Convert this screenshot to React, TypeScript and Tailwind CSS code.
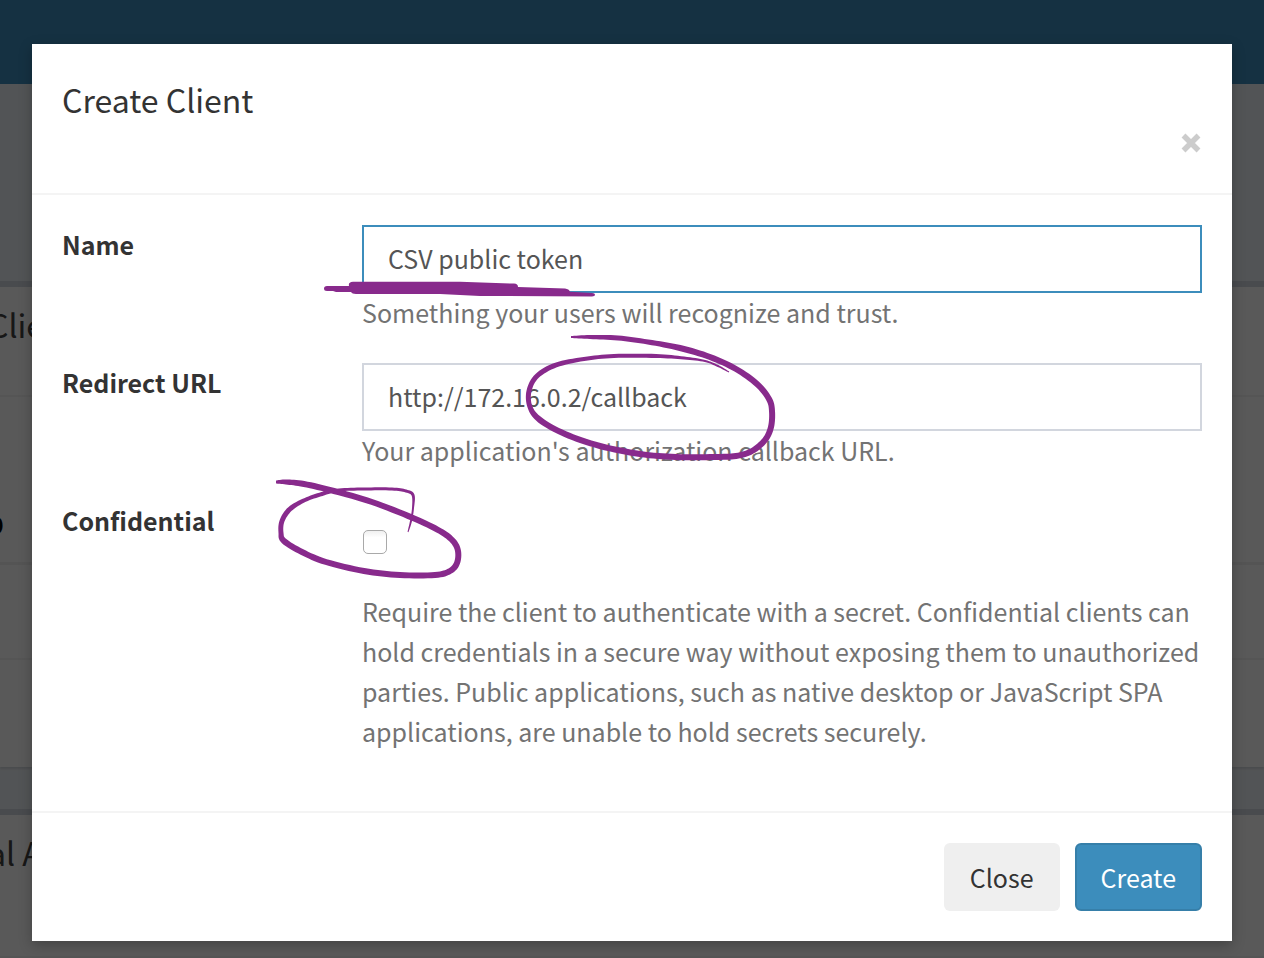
import { useState } from "react";

type BrushPoint = [x: number, y: number, width: number];

const CHECKBOX_LOOP: BrushPoint[] = [
  [276, 482, 3], [286, 482, 5], [304, 484, 6], [334, 491, 6], [372, 502, 6], [413, 518, 6],
  [440, 531, 6], [453, 541, 6], [458, 551, 6], [457, 563, 6], [450, 571, 6], [435, 575, 6],
  [400, 575, 6], [364, 571, 6], [326, 562, 6], [302, 552, 6], [284, 541, 6], [281, 533, 5],
  [282, 521, 5], [290, 509, 5], [305, 500, 4], [322, 494, 4], [339, 490, 3], [364, 489, 3],
  [392, 489, 3], [406, 491, 3], [413, 495, 3], [413, 508, 2], [411, 521, 2], [408, 532, 1],
];

const CALLBACK_LOOP: BrushPoint[] = [
  [571, 337, 2], [590, 337, 4], [618, 338, 5], [648, 342, 5], [680, 348, 6], [710, 357, 6],
  [736, 369, 6], [757, 384, 6], [769, 399, 6], [772, 411, 6], [771, 427, 6], [765, 440, 6],
  [752, 451, 6], [736, 456, 6], [714, 457, 6], [676, 457, 6], [640, 454, 6], [600, 446, 6],
  [565, 434, 6], [540, 420, 6], [530, 407, 5], [529, 391, 5], [537, 376, 5], [556, 365, 5],
  [584, 359, 4], [614, 356, 4], [656, 356, 4], [684, 358, 3], [705, 361, 2], [718, 366, 2],
  [729, 372, 1],
];

/** Outline of a tapering pen stroke that runs smoothly through the given points. */
function brushPath(points: BrushPoint[]): string {
  const samples: BrushPoint[] = [];
  const steps = 8;
  for (let i = 0; i < points.length - 1; i++) {
    const p0 = points[Math.max(i - 1, 0)];
    const p1 = points[i];
    const p2 = points[i + 1];
    const p3 = points[Math.min(i + 2, points.length - 1)];
    for (let s = 0; s < steps; s++) {
      const t = s / steps;
      const at = (k: 0 | 1 | 2) =>
        0.5 *
        (2 * p1[k] +
          (p2[k] - p0[k]) * t +
          (2 * p0[k] - 5 * p1[k] + 4 * p2[k] - p3[k]) * t * t +
          (3 * p1[k] - p0[k] - 3 * p2[k] + p3[k]) * t * t * t);
      samples.push([at(0), at(1), at(2)]);
    }
  }
  samples.push(points[points.length - 1]);
  const left: string[] = [];
  const right: string[] = [];
  samples.forEach(([x, y, w], i) => {
    const a = samples[Math.max(i - 1, 0)];
    const b = samples[Math.min(i + 1, samples.length - 1)];
    const len = Math.hypot(b[0] - a[0], b[1] - a[1]) || 1;
    const nx = (-(b[1] - a[1]) / len) * (w / 2);
    const ny = ((b[0] - a[0]) / len) * (w / 2);
    left.push(`${(x + nx).toFixed(2)} ${(y + ny).toFixed(2)}`);
    right.unshift(`${(x - nx).toFixed(2)} ${(y - ny).toFixed(2)}`);
  });
  return `M${left.join("L")}L${right.join("L")}Z`;
}

function Annotations() {
  return (
    <svg
      className="pointer-events-none absolute top-0 left-0 h-[897px] w-[1200px] max-w-none"
      viewBox="32 44 1200 897"
      fill="#882a8c"
      aria-hidden="true"
    >
      <path d="M324 288.500Q324 286 327 286L349 286Q348 282 353 281.700L460 281.700L514 283.600Q518 284 518 287L565 288.500Q569 289 570 291.700L592 293Q595 293 595 295Q595 296.400 592 296.400L480 296L440 293.900L356 294Q352 293.800 351 292L336 292L333 291L327 291Q324 291 324 288.500Z" />
      <path d={brushPath(CALLBACK_LOOP)} />
      <path d={brushPath(CHECKBOX_LOOP)} />
    </svg>
  );
}

function PageBehind() {
  return (
    <div className="col-start-1 row-start-1 overflow-hidden bg-[#ecf0f5] text-[32px] leading-10 text-[#444]" aria-hidden="true">
      <div className="h-[84px] bg-[#3c8dbc]" />
      <div className="mt-[197px] border-t-[6px] border-[#d2d6de] bg-white shadow-[0_2px_2px_rgba(0,0,0,0.1)]">
        <div className="-ml-3 h-[110px] border-b-2 border-[#f4f4f4] pt-[17px]">Clie</div>
        <div className="-ml-[14px] h-[168px] border-b-3 border-[#f0f0f0] pt-[107px] text-[25px] font-bold text-black">D</div>
        <div className="h-[95px] border-b-2 border-[#f4f4f4]" />
        <div className="h-[107px]" />
      </div>
      <div className="mt-[42px] border-t-[6px] border-[#d2d6de] bg-white">
        <div className="-ml-3 h-[143px] border-b-2 border-[#f4f4f4] pt-[17px]">al A</div>
      </div>
    </div>
  );
}

interface TextFieldProps {
  id: string;
  label: string;
  help: string;
  value: string;
  active?: boolean;
  onChange: (value: string) => void;
}

function TextField({ id, label, help, value, active = false, onChange }: TextFieldProps) {
  return (
    <div className="grid grid-cols-[270px_1fr] gap-x-[30px]">
      <label htmlFor={id} className="-mt-px font-bold">
        {label}
      </label>
      <div>
        <input
          id={id}
          type="text"
          value={value}
          onChange={(e) => onChange(e.target.value)}
          aria-describedby={`${id}-help`}
          className={`block h-[68px] w-full border-2 bg-white px-6 pb-0.5 text-[#555] outline-none focus:border-[#3c8dbc] ${
            active ? "border-[#3c8dbc]" : "border-[#d2d6de]"
          }`}
        />
        <p id={`${id}-help`} className="-mt-px text-[#737373]">
          {help}
        </p>
      </div>
    </div>
  );
}

export default function App() {
  const [name, setName] = useState("CSV public token");
  const [redirect, setRedirect] = useState("http://172.16.0.2/callback");
  const [confidential, setConfidential] = useState(false);

  return (
    <div className="grid min-h-screen grid-cols-1 font-['Noto_Sans_CJK_SC','Noto_Sans',sans-serif] text-[25px] leading-10 text-[#333]">
      <PageBehind />
      <div className="z-10 col-start-1 row-start-1 bg-black/65 px-8 pt-11 pb-4">
        <section
          role="dialog"
          aria-modal="true"
          aria-labelledby="dialog-title"
          className="relative bg-white shadow-[0_4px_12px_rgba(0,0,0,0.25)]"
        >
          <header className="flex h-[151px] items-start justify-between border-b-2 border-[#f4f4f4] px-[30px] pt-[35px]">
            <h4 id="dialog-title" className="text-[32px]">
              Create Client
            </h4>
            <button type="button" aria-label="Dismiss" className="mt-[53px] p-px">
              <svg className="size-5" viewBox="0 0 20 20" stroke="#ccc" strokeWidth="5.500" aria-hidden="true">
                <path d="M2.500 2.500L17.500 17.500M17.500 2.500L2.500 17.500" />
              </svg>
            </button>
          </header>

          <form className="flex flex-col gap-[31px] px-[30px] pt-[30px] pb-[60px]">
            <TextField
              id="client-name"
              label="Name"
              help="Something your users will recognize and trust."
              value={name}
              active
              onChange={setName}
            />
            <TextField
              id="redirect-url"
              label="Redirect URL"
              help="Your application's authorization callback URL."
              value={redirect}
              onChange={setRedirect}
            />
            <div className="grid grid-cols-[270px_1fr] gap-x-[30px]">
              <label htmlFor="confidential" className="-mt-px font-bold">
                Confidential
              </label>
              <div>
                <input
                  id="confidential"
                  type="checkbox"
                  checked={confidential}
                  onChange={(e) => setConfidential(e.target.checked)}
                  aria-describedby="confidential-help"
                  className="mt-[29px] mb-[38px] ml-px block size-6 appearance-none rounded-[5px] border border-[#a9a9a9] bg-linear-to-b from-[#f0f0f0] to-white to-30% checked:bg-[#3c8dbc] checked:bg-none"
                />
                <p id="confidential-help" className="-mt-px text-[#737373]">
                  Require the client to authenticate with a secret. Confidential clients can hold credentials in a
                  secure way without exposing them to unauthorized parties. Public applications, such as native desktop
                  or JavaScript SPA applications, are unable to hold secrets securely.
                </p>
              </div>
            </div>
          </form>

          <footer className="flex justify-end gap-[15px] border-t-2 border-[#f4f4f4] p-[30px]">
            <button type="button" className="h-[68px] rounded-md bg-[#efefef] px-[26px]">
              Close
            </button>
            <button
              type="button"
              className="h-[68px] rounded-md border-2 border-[#367fa9] bg-[#3c8dbc] px-6 text-white"
            >
              Create
            </button>
          </footer>
          <Annotations />
        </section>
      </div>
    </div>
  );
}
